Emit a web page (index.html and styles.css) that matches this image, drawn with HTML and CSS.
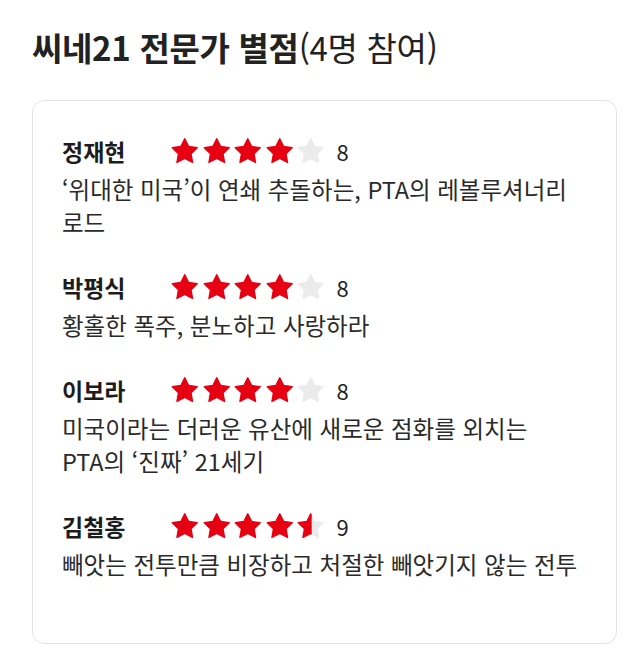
FILE: index.html
```html
<!DOCTYPE html>
<html lang="ko">
<head>
<meta charset="utf-8">
<link rel="stylesheet" href="styles.css">
</head>
<body>
<svg width="0" height="0" class="defs">
  <defs>
    <path id="star" d="M12 1.5L15.4 8.3L22.9 9.4L17.5 14.7L18.8 22.2L12 18.7L5.2 22.2L6.5 14.7L1.1 9.4L8.6 8.3Z"/>
  </defs>
</svg>
<h1 class="title"><b>씨네21 전문가 별점</b>(4명 참여)</h1>
<div class="card">
  <div class="review">
    <div class="head">
      <span class="name">정재현</span>
      <span class="stars">
        <svg class="on" viewBox="0 0 24 24"><use href="#star"/></svg>
        <svg class="on" viewBox="0 0 24 24"><use href="#star"/></svg>
        <svg class="on" viewBox="0 0 24 24"><use href="#star"/></svg>
        <svg class="on" viewBox="0 0 24 24"><use href="#star"/></svg>
        <svg class="off" viewBox="0 0 24 24"><use href="#star"/></svg>
      </span>
      <span class="score">8</span>
    </div>
    <p class="text">‘위대한 미국’이 연쇄 추돌하는, PTA의 레볼루셔너리 로드</p>
  </div>
  <div class="review">
    <div class="head">
      <span class="name">박평식</span>
      <span class="stars">
        <svg class="on" viewBox="0 0 24 24"><use href="#star"/></svg>
        <svg class="on" viewBox="0 0 24 24"><use href="#star"/></svg>
        <svg class="on" viewBox="0 0 24 24"><use href="#star"/></svg>
        <svg class="on" viewBox="0 0 24 24"><use href="#star"/></svg>
        <svg class="off" viewBox="0 0 24 24"><use href="#star"/></svg>
      </span>
      <span class="score">8</span>
    </div>
    <p class="text">황홀한 폭주, 분노하고 사랑하라</p>
  </div>
  <div class="review">
    <div class="head">
      <span class="name">이보라</span>
      <span class="stars">
        <svg class="on" viewBox="0 0 24 24"><use href="#star"/></svg>
        <svg class="on" viewBox="0 0 24 24"><use href="#star"/></svg>
        <svg class="on" viewBox="0 0 24 24"><use href="#star"/></svg>
        <svg class="on" viewBox="0 0 24 24"><use href="#star"/></svg>
        <svg class="off" viewBox="0 0 24 24"><use href="#star"/></svg>
      </span>
      <span class="score">8</span>
    </div>
    <p class="text">미국이라는 더러운 유산에 새로운 점화를 외치는 PTA의 ‘진짜’ 21세기</p>
  </div>
  <div class="review">
    <div class="head">
      <span class="name">김철홍</span>
      <span class="stars">
        <svg class="on" viewBox="0 0 24 24"><use href="#star"/></svg>
        <svg class="on" viewBox="0 0 24 24"><use href="#star"/></svg>
        <svg class="on" viewBox="0 0 24 24"><use href="#star"/></svg>
        <svg class="on" viewBox="0 0 24 24"><use href="#star"/></svg>
        <svg class="half" viewBox="0 0 24 24">
          <defs><clipPath id="halfclip"><rect x="0" y="0" width="12.8" height="24"/></clipPath></defs>
          <use href="#star" class="half-bg"/>
          <use href="#star" class="half-fg" clip-path="url(#halfclip)"/>
        </svg>
      </span>
      <span class="score">9</span>
    </div>
    <p class="text">빼앗는 전투만큼 비장하고 처절한 빼앗기지 않는 전투</p>
  </div>
</div>
</body>
</html>
```
FILE: styles.css
```css
html, body {
  margin: 0;
  padding: 0;
  background: #ffffff;
}
body {
  font-family: "Noto Sans CJK KR", "Noto Sans", sans-serif;
  color: #222222;
}
.defs {
  position: absolute;
  width: 0;
  height: 0;
}
.title {
  margin: 0;
  padding: 28px 0 0 32px;
  font-size: 33px;
  line-height: 38px;
  font-weight: 400;
  color: #222222;
  letter-spacing: -0.3px;
}
.title b {
  font-weight: 700;
}
.card {
  margin: 34px 23px 0 32px;
  border: 1px solid #e3e3e3;
  border-radius: 12px;
  padding: 30px 24px 0 29px;
  box-sizing: border-box;
  height: 544px;
}
.review {
  margin-bottom: 28px;
}
.head {
  display: flex;
  align-items: center;
  height: 40px;
}
.name {
  width: 109px;
  flex-shrink: 0;
  font-size: 23px;
  font-weight: 700;
  color: #1c1c1c;
}
.stars {
  display: flex;
  gap: 4px;
}
.stars svg {
  width: 27.5px;
  height: 27.5px;
  display: block;
}
.stars use {
  stroke-width: 1.2;
  stroke-linejoin: round;
}
.on {
  fill: #e60012;
  stroke: #e60012;
}
.off {
  fill: #ebebeb;
  stroke: #ebebeb;
}
.half-bg {
  fill: #ebebeb;
  stroke: #ebebeb;
}
.half-fg {
  fill: #e60012;
  stroke: #e60012;
}
.score {
  margin-left: 12px;
  font-size: 22px;
  color: #222222;
}
.text {
  margin: 2px 0 0 0;
  font-size: 23.5px;
  line-height: 33px;
  color: #2a2a2a;
  word-break: keep-all;
}
```
